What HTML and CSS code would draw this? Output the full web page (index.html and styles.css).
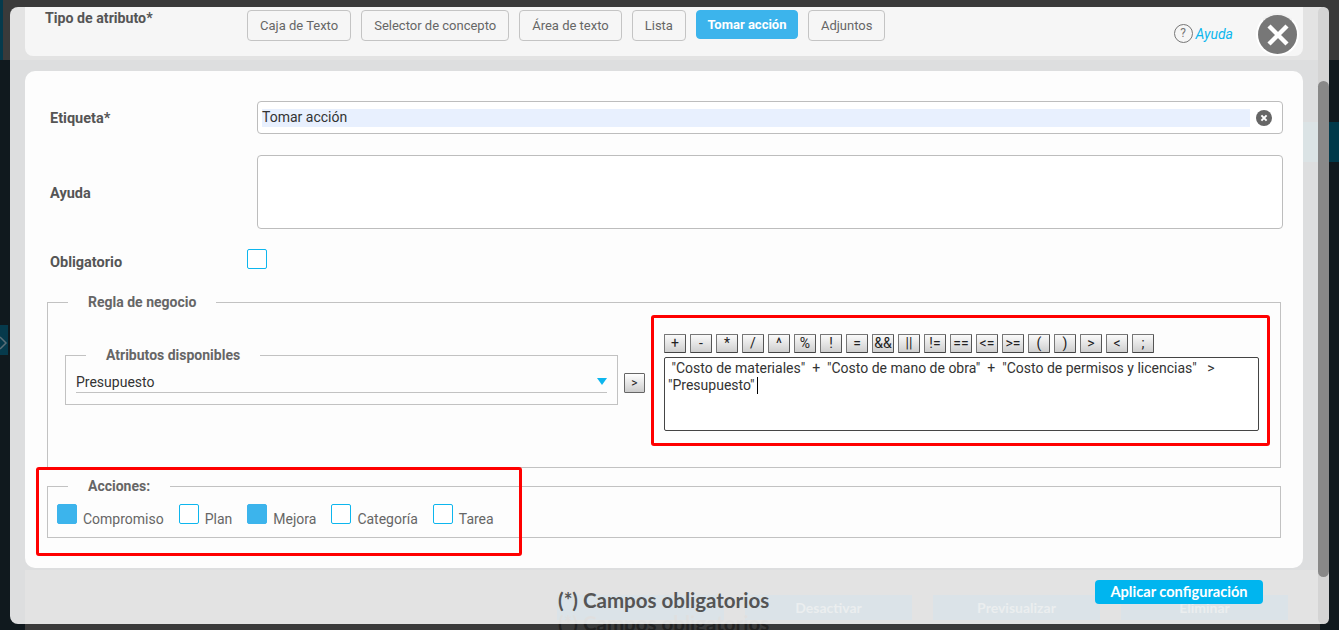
FILE: index.html
```html
<!DOCTYPE html>
<html lang="es">
<head>
<meta charset="utf-8">
<title>Tomar acción</title>
<link rel="stylesheet" href="styles.css">
</head>
<body>
<div class="page">
  <div class="ghost-footer">
    <div class="ghost-row">
      <span class="ghost-btn"></span>
      <span class="ghost-btn">Desactivar</span>
      <span class="ghost-btn">Previsualizar</span>
      <span class="ghost-btn">Eliminar</span>
    </div>
    <div class="ghost-title">(*) Campos obligatorios</div>
  </div>
  <svg class="ghost-chevron" width="8" height="20" viewBox="0 0 8 20"><path d="M0 4l6 6-6 6" fill="none" stroke="#5b6f78" stroke-width="1.5"/></svg>

  <div class="modal">
    <div class="content">
      <header class="top-panel">
        <div class="type-label">Tipo de atributo*</div>
        <div class="type-buttons">
          <button class="type-btn">Caja de Texto</button>
          <button class="type-btn">Selector de concepto</button>
          <button class="type-btn">Área de texto</button>
          <button class="type-btn">Lista</button>
          <button class="type-btn active">Tomar acción</button>
          <button class="type-btn">Adjuntos</button>
        </div>
        <a class="help"><span class="help-icon">?</span><span class="help-text">Ayuda</span></a>
      </header>

      <main class="card">
        <div class="form-row row-label">
          <label class="form-label">Etiqueta*</label>
          <div class="input">
            <span class="input-value">Tomar acción</span>
            <svg class="clear-icon" width="16" height="16" viewBox="0 0 16 16"><circle cx="8" cy="8" r="8" fill="#666"/><path d="M5.4 5.4l5.2 5.2M10.6 5.4l-5.2 5.2" stroke="#fff" stroke-width="2"/></svg>
          </div>
        </div>
        <div class="form-row row-help">
          <label class="form-label">Ayuda</label>
          <div class="textarea"></div>
        </div>
        <div class="form-row row-required">
          <label class="form-label short">Obligatorio</label>
          <span class="check"></span>
        </div>

        <fieldset class="group rule-group">
          <legend>Regla de negocio</legend>
          <div class="rule-body">
            <div class="attr-col">
              <fieldset class="group attr-group">
                <legend>Atributos disponibles</legend>
                <div class="select">
                  <span>Presupuesto</span>
                  <span class="caret"></span>
                </div>
              </fieldset>
              <button class="add-btn">&gt;</button>
            </div>
            <div class="editor-col">
              <div class="operators">
                <button class="op">+</button><button class="op">-</button><button class="op">*</button><button class="op">/</button><button class="op">^</button><button class="op">%</button><button class="op">!</button><button class="op">=</button><button class="op">&amp;&amp;</button><button class="op">||</button><button class="op">!=</button><button class="op">==</button><button class="op">&lt;=</button><button class="op">&gt;=</button><button class="op">(</button><button class="op">)</button><button class="op">&gt;</button><button class="op">&lt;</button><button class="op">;</button>
              </div>
              <div class="editor"> "Costo de materiales"  +  "Costo de mano de obra"  +  "Costo de permisos y licencias"   &gt;  "Presupuesto"<span class="cursor"></span></div>
            </div>
          </div>
        </fieldset>

        <fieldset class="group actions-group">
          <legend>Acciones:</legend>
          <div class="actions">
            <label class="action"><span class="check on"></span><span class="action-text">Compromiso</span></label>
            <label class="action"><span class="check"></span><span class="action-text">Plan</span></label>
            <label class="action"><span class="check on"></span><span class="action-text">Mejora</span></label>
            <label class="action"><span class="check"></span><span class="action-text">Categoría</span></label>
            <label class="action"><span class="check"></span><span class="action-text">Tarea</span></label>
          </div>
        </fieldset>
      </main>

      <footer class="modal-footer">
        <div class="required-note">(*) Campos obligatorios</div>
        <button class="apply">Aplicar configuración</button>
      </footer>
    </div>
    <div class="scrollbar"><div class="thumb"></div></div>
    <button class="close" aria-label="Cerrar">
      <svg width="24" height="24" viewBox="0 0 24 24"><path d="M3 3l18 18M21 3L3 21" stroke="#fff" stroke-width="4.4" fill="none"/></svg>
    </button>
  </div>

  <div class="mark mark-editor"></div>
  <div class="mark mark-actions"></div>
</div>
</body>
</html>
```

FILE: styles.css
```css
* { box-sizing: border-box; }
html, body { margin: 0; padding: 0; }
body { font-family: Roboto, "Liberation Sans", sans-serif; font-size: 14px; color: #555; }
button { font-family: inherit; cursor: pointer; }

.page {
  position: relative;
  width: 1339px;
  height: 630px;
  overflow: hidden;
  padding: 7px 0 0 10px;
  background:
    linear-gradient(#063a4c, #063a4c) 0 0 / 3px 60px no-repeat,
    linear-gradient(#063a4c, #063a4c) 0 325px / 8px 30px no-repeat,
    linear-gradient(#00394a, #00394a) 1303px 122px / 36px 40px no-repeat,
    linear-gradient(#3a3a3a, #3a3a3a) 0 0 / 100% 60px no-repeat,
    linear-gradient(#3a3a3a, #3a3a3a) 25px 570px / 1295px 60px no-repeat,
    #10191e;
}

.ghost-footer { position: absolute; left: 557px; top: 595px; }
.ghost-row { display: flex; gap: 21px; }
.ghost-btn {
  width: 167px; height: 25px;
  background: #003e5a;
  color: #75858f;
  font: 700 14px/25px Lato, sans-serif;
  text-align: center;
}
.ghost-title { margin: -9px 0 0 1px; font: 700 20.5px/24px Lato, sans-serif; color: #222; }
.ghost-chevron { position: absolute; left: 0; top: 333px; }

.modal {
  position: relative;
  display: flex;
  width: 1319px;
  height: 617px;
  padding-left: 15px;
  background: rgba(255, 255, 255, 0.86);
  border-radius: 8px;
}
.content { width: 1278px; }

.top-panel {
  display: flex;
  height: 49px;
  padding: 3px 0 0 20px;
  background: #f6f6f6;
  border-radius: 0 0 8px 8px;
}
.type-label { width: 202px; font-size: 14.2px; font-weight: 700; line-height: 16px; color: #555; }
.type-buttons { display: flex; gap: 10px; align-items: flex-start; }
.type-btn {
  height: 31px;
  padding: 0 12px;
  background: #f6f6f6;
  border: 1px solid #c4c4c4;
  border-radius: 4px;
  font-size: 13px;
  color: #666;
}
.type-btn.active {
  width: 102px;
  height: 29px;
  padding: 0;
  background: #3cb4ec;
  border-color: #3cb4ec;
  color: #fff;
  font-weight: 700;
}
.help { display: flex; align-items: center; gap: 3px; height: 19px; margin: 14px 70px 0 auto; }
.help-icon {
  width: 19px; height: 19px;
  border: 1px solid #777;
  border-radius: 50%;
  font-size: 12px;
  line-height: 17px;
  text-align: center;
  color: #777;
}
.help-text { font-style: italic; font-size: 14px; color: #0db6ee; }

.close {
  position: absolute;
  left: 1246px; top: 6px;
  display: flex; align-items: center; justify-content: center;
  width: 43px; height: 43px;
  padding: 0;
  background: #777;
  border: 2px solid #fff;
  border-top-color: #f2f2f2;
  border-radius: 50%;
}

.card {
  height: 497px;
  margin-top: 15px;
  padding: 30px 20px 0 22px;
  background: #fdfdfd;
  border-radius: 10px;
}
.form-row { display: flex; align-items: center; }
.form-label { width: 210px; padding: 2px 0 0 3px; font-size: 14.5px; font-weight: 700; color: #555; }
.form-label.short { width: 200px; padding-top: 6px; }
.input {
  display: flex; align-items: center;
  flex: none;
  width: 1026px; height: 33px;
  padding: 0 10px 0 4px;
  background: #fff;
  border: 1px solid #bdbdbd;
  border-radius: 4px;
}
.input-value { flex: 1; height: 18px; background: #e8f0fe; color: #333; line-height: 16px; }
.clear-icon { margin-left: 6px; }
.row-help { margin-top: 21px; }
.textarea { flex: none; width: 1026px; height: 74px; background: #fff; border: 1px solid #bdbdbd; border-radius: 4px; }
.row-required { margin-top: 20px; height: 20px; }

.check {
  display: inline-block;
  flex: none;
  width: 20px; height: 20px;
  background: #fff;
  border: 1px solid #0db6ee;
  border-radius: 2px;
}
.check.on { background: #3cb4ec; border-color: #3cb4ec; }

.group {
  min-width: 0;
  margin: 0;
  padding: 0;
  border: 1px solid #c2c2c2;
}
.group legend {
  margin-left: 20px;
  padding: 0 20px;
  font-weight: 700;
  line-height: 17px;
  color: #666;
}
.rule-group { width: 1234px; height: 174px; margin-top: 25px; }
.rule-body { display: flex; padding: 0 0 0 17px; }
.attr-col { display: flex; align-items: flex-start; width: 599px; padding-top: 36px; }
.attr-group { width: 553px; height: 58px; }
.select {
  display: flex; justify-content: space-between; align-items: center;
  width: 531px; height: 21px;
  margin: 8px 0 0 10px;
  border-bottom: 1px solid #c2c2c2;
  color: #333;
}
.caret {
  width: 0; height: 0; margin: -2px 0 0;
  border-left: 5.5px solid transparent;
  border-right: 5.5px solid transparent;
  border-top: 7px solid #0db6ee;
}
.add-btn {
  width: 21px; height: 20px;
  margin: 26px 0 0 6px;
  padding: 0;
  background: linear-gradient(#fff, #ccc);
  border: 1px solid #666;
  border-radius: 1px;
  font-size: 12px;
  color: #222;
}
.editor-col { width: 595px; padding-top: 23px; }
.operators { display: flex; gap: 4px; }
.op {
  width: 22px; height: 19px;
  padding: 0;
  background: linear-gradient(#fafafa, #cfcfcf);
  border: 1px solid #777;
  border-right-color: #555;
  border-bottom-color: #444;
  border-radius: 1px;
  font-size: 14px;
  line-height: 15px;
  color: #222;
}
.editor {
  width: 595px; height: 74px;
  margin-top: 4px;
  padding: 2px 3px;
  background: #fff;
  border: 1px solid #444;
  border-radius: 2px;
  font-size: 14px;
  line-height: 17px;
  color: #333;
  white-space: pre-wrap;
}
.cursor { display: inline-block; width: 1px; height: 17px; margin-left: 2px; background: #000; vertical-align: -4px; }

.actions-group { width: 1234px; height: 60px; margin-top: 10px; }
.actions { display: flex; padding: 9px 0 0 9px; }
.action { display: flex; color: #666; margin-right: 15px; }
.action-text { margin: 7px 0 0 6px; line-height: 16px; }

.modal-footer {
  display: flex;
  justify-content: space-between;
  align-items: flex-start;
  padding: 12px 40px 0 533px;
}
.required-note { margin-top: 8px; font: 700 20.5px/24px Lato, sans-serif; color: #555; }
.apply {
  width: 168px; height: 24px;
  padding: 0;
  background: #00b5ef;
  border: 0;
  border-radius: 4px;
  font: 700 14.6px/24px Lato, sans-serif;
  color: #fff;
}

.scrollbar {
  width: 11px;
  height: 617px;
  margin-left: 15px;
  padding-top: 74px;
  background: #d4d4d4;
  border-radius: 6px;
}
.thumb { height: 496px; background: #888; border-radius: 6px; }

.mark { position: absolute; border: 3px solid #f00; border-radius: 3px; pointer-events: none; }
.mark-editor { left: 651px; top: 315px; width: 619px; height: 131px; }
.mark-actions { left: 36px; top: 467px; width: 486px; height: 89px; }
```
